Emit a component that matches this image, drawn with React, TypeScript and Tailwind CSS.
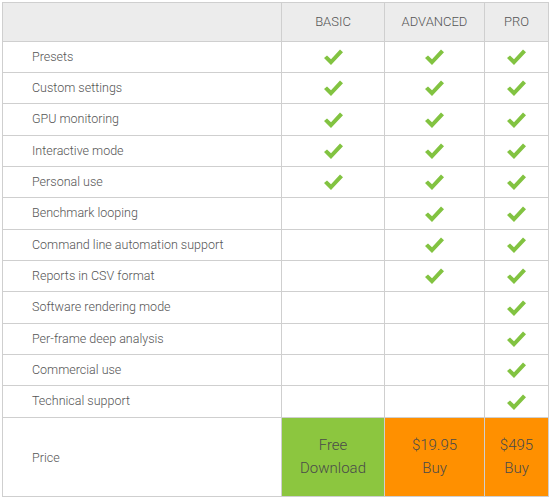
const FONT = "font-['Roboto','Liberation_Sans',sans-serif]";

type Row = { name: string; basic: boolean; adv: boolean; pro: boolean; h: string };

const ROWS: Row[] = [
  { name: "Presets", basic: true, adv: true, pro: true, h: "h-[31px]" },
  { name: "Custom settings", basic: true, adv: true, pro: true, h: "h-[31px]" },
  { name: "GPU monitoring", basic: true, adv: true, pro: true, h: "h-[32px]" },
  { name: "Interactive mode", basic: true, adv: true, pro: true, h: "h-[31px]" },
  { name: "Personal use", basic: true, adv: true, pro: true, h: "h-[31px]" },
  { name: "Benchmark looping", basic: false, adv: true, pro: true, h: "h-[32px]" },
  { name: "Command line automation support", basic: false, adv: true, pro: true, h: "h-[31px]" },
  { name: "Reports in CSV format", basic: false, adv: true, pro: true, h: "h-[31px]" },
  { name: "Software rendering mode", basic: false, adv: false, pro: true, h: "h-[32px]" },
  { name: "Per-frame deep analysis", basic: false, adv: false, pro: true, h: "h-[31px]" },
  { name: "Commercial use", basic: false, adv: false, pro: true, h: "h-[31px]" },
  { name: "Technical support", basic: false, adv: false, pro: true, h: "h-[32px]" },
];

function Check() {
  return (
    <svg width="19" height="16" viewBox="0 0 19 16">
      <polygon points="0,9 3,6.5 7,10.3 16,0.5 19,3.3 7,16" fill="#82c341" />
    </svg>
  );
}

function Cell({ on, w }: { on: boolean; w: string }) {
  return (
    <div className={`${w} shrink-0 border-r border-[#cfcfcf] flex items-center justify-center`}>
      {on && <Check />}
    </div>
  );
}

export default function App() {
  return (
    <div className={`${FONT} font-light bg-white w-[552px] h-[500px] pt-[2px] pl-[2px] text-[12.5px] text-[#555]`}>
      <div className="w-[547px] border-l border-t border-[#cfcfcf]">
        {/* header */}
        <div className="flex h-[39px] bg-[#ececec] border-b border-[#cfcfcf] text-[13px]">
          <div className="w-[279px] shrink-0 border-r border-[#cfcfcf]" />
          <div className="w-[103px] shrink-0 border-r border-[#cfcfcf] flex items-center justify-center">BASIC</div>
          <div className="w-[100px] shrink-0 border-r border-[#cfcfcf] flex items-center justify-center">ADVANCED</div>
          <div className="w-[64px] shrink-0 border-r border-[#cfcfcf] flex items-center justify-center">PRO</div>
        </div>

        {ROWS.map((r) => (
          <div key={r.name} className={`flex ${r.h} border-b border-[#cfcfcf]`}>
            <div className="w-[279px] shrink-0 border-r border-[#cfcfcf] flex items-center pl-[29px]">{r.name}</div>
            <Cell on={r.basic} w="w-[103px]" />
            <Cell on={r.adv} w="w-[100px]" />
            <Cell on={r.pro} w="w-[64px]" />
          </div>
        ))}

        {/* price */}
        <div className="flex h-[79px] border-b border-[#cfcfcf] text-[15px] leading-[23px] text-[#4a4a4a]">
          <div className="w-[279px] shrink-0 border-r border-[#cfcfcf] flex items-center pl-[29px] text-[12.5px] text-[#555]">Price</div>
          <div className="w-[103px] shrink-0 border-r border-[#cfcfcf] bg-[#8cc63f] flex flex-col items-center justify-center">
            <span>Free</span>
            <span>Download</span>
          </div>
          <div className="w-[100px] shrink-0 border-r border-[#cfcfcf] bg-[#ff9000] flex flex-col items-center justify-center">
            <span>$19.95</span>
            <span>Buy</span>
          </div>
          <div className="w-[64px] shrink-0 border-r border-[#cfcfcf] bg-[#ff9000] flex flex-col items-center justify-center">
            <span>$495</span>
            <span>Buy</span>
          </div>
        </div>
      </div>
    </div>
  );
}
